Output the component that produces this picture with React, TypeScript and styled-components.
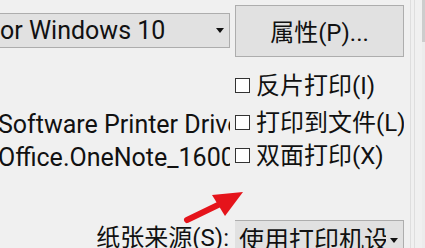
import React from "react";
import styled, { createGlobalStyle } from "styled-components";

const Global = createGlobalStyle`
  html, body { margin: 0; padding: 0; background: #f0f0f0; }
  body { font-family: Roboto, "Noto Sans CJK SC", sans-serif; color: #111; }
`;

const Dialog = styled.div`
  position: relative;
  width: 425px;
  height: 248px;
  overflow: hidden;
  background: #f0f0f0;
  display: grid;
  grid-template-columns: 230px 169px 1fr;
  grid-template-rows: 67px 37px 37px 29px 1fr;
  column-gap: 5px;
  font-size: 24px;
`;

const Cell = styled.div<{ $row: number; $col: number; $align?: string }>`
  grid-row: ${(p) => p.$row};
  grid-column: ${(p) => p.$col};
  display: flex;
  align-items: ${(p) => p.$align ?? "center"};
  min-width: 0;
  overflow: hidden;
  white-space: nowrap;
`;

const Combo = styled.div<{ $top: number; $height: number; $shift: number; $pad: number }>`
  box-sizing: border-box;
  margin-top: ${(p) => p.$top}px;
  margin-left: ${(p) => p.$shift}px;
  height: ${(p) => p.$height}px;
  flex: 1;
  min-width: 0;
  display: flex;
  align-items: center;
  background: #e1e1e1;
  border: 1px solid #adadad;
  padding: 0 5px 0 ${(p) => p.$pad}px;
  font-size: 25px;
  line-height: 1;
`;

const ComboText = styled.span`
  flex: 1;
  min-width: 0;
  overflow: hidden;
  white-space: nowrap;
`;

const Arrow = styled.svg`
  flex: none;
  width: 8px;
  height: 5px;
  margin-left: 4px;
`;

const PushButton = styled.div`
  box-sizing: border-box;
  margin-top: 5px;
  height: 52px;
  width: 169px;
  display: flex;
  align-items: center;
  justify-content: center;
  background: #e1e1e1;
  border: 1px solid #adadad;
  font-size: 24px;
  padding-bottom: 2px;
`;

const CheckRow = styled.label`
  display: flex;
  align-items: center;
  gap: 6px;
  font-size: 24px;
  line-height: 1;
`;

const Box = styled.span`
  box-sizing: border-box;
  width: 15px;
  height: 15px;
  flex: none;
  border: 1px solid #333;
  background: #fff;
`;

const ClippedText = styled.span`
  margin-left: -2px;
  font-size: 25px;
  line-height: 1;
  padding-top: 4px;
`;

const Label = styled.span`
  margin-top: 56px;
  margin-left: auto;
  font-size: 24px;
  line-height: 1;
  padding-right: 1px;
`;

const Edge = styled.div`
  grid-row: 1 / -1;
  grid-column: 3;
  position: relative;
  display: flex;
  gap: 3px;
  padding-left: 1px;
`;

const EdgeLine = styled.div`
  width: 1px;
  background: #dedede;
`;

const Scroll = styled.div`
  width: 6px;
  margin-left: 4px;
  background: linear-gradient(#cdcdcd 0, #cdcdcd 42px, #ececec 42px);
`;

const Overlay = styled.svg`
  position: absolute;
  left: 180px;
  top: 185px;
  width: 70px;
  height: 45px;
  pointer-events: none;
`;

const DropArrow = () => (
  <Arrow viewBox="0 0 8 5">
    <path d="M0 0 H8 L4 5 Z" fill="#111" />
  </Arrow>
);

export default function App() {
  return (
    <>
      <Global />
      <Dialog>
        <Cell $row={1} $col={1} $align="flex-start">
          <Combo $top={13} $height={35} $shift={-4} $pad={3}>
            <ComboText>or Windows 10</ComboText>
            <DropArrow />
          </Combo>
        </Cell>
        <Cell $row={1} $col={2} $align="flex-start">
          <PushButton>属性(P)...</PushButton>
        </Cell>

        <Cell $row={2} $col={2}>
          <CheckRow>
            <Box />
            反片打印(I)
          </CheckRow>
        </Cell>

        <Cell $row={3} $col={1}>
          <ClippedText>Software Printer Driver</ClippedText>
        </Cell>
        <Cell $row={3} $col={2}>
          <CheckRow>
            <Box />
            打印到文件(L)
          </CheckRow>
        </Cell>

        <Cell $row={4} $col={1}>
          <ClippedText>Office.OneNote_16001</ClippedText>
        </Cell>
        <Cell $row={4} $col={2}>
          <CheckRow>
            <Box />
            双面打印(X)
          </CheckRow>
        </Cell>

        <Cell $row={5} $col={1} $align="flex-start">
          <Label>纸张来源(S):</Label>
        </Cell>
        <Cell $row={5} $col={2} $align="flex-start">
          <Combo $top={50} $height={40} $shift={-1} $pad={4}>
            <ComboText>使用打印机设置</ComboText>
            <DropArrow />
          </Combo>
        </Cell>

        <Edge>
          <EdgeLine />
          <EdgeLine />
          <Scroll />
        </Edge>

        <Overlay viewBox="0 0 70 45">
          <path
            d="M7 35 L38 20"
            stroke="#e5141b"
            strokeWidth="6"
            strokeLinecap="round"
          />
          <path d="M63 7 L32 10 L45 31 Z" fill="#e5141b" />
        </Overlay>
      </Dialog>
    </>
  );
}
